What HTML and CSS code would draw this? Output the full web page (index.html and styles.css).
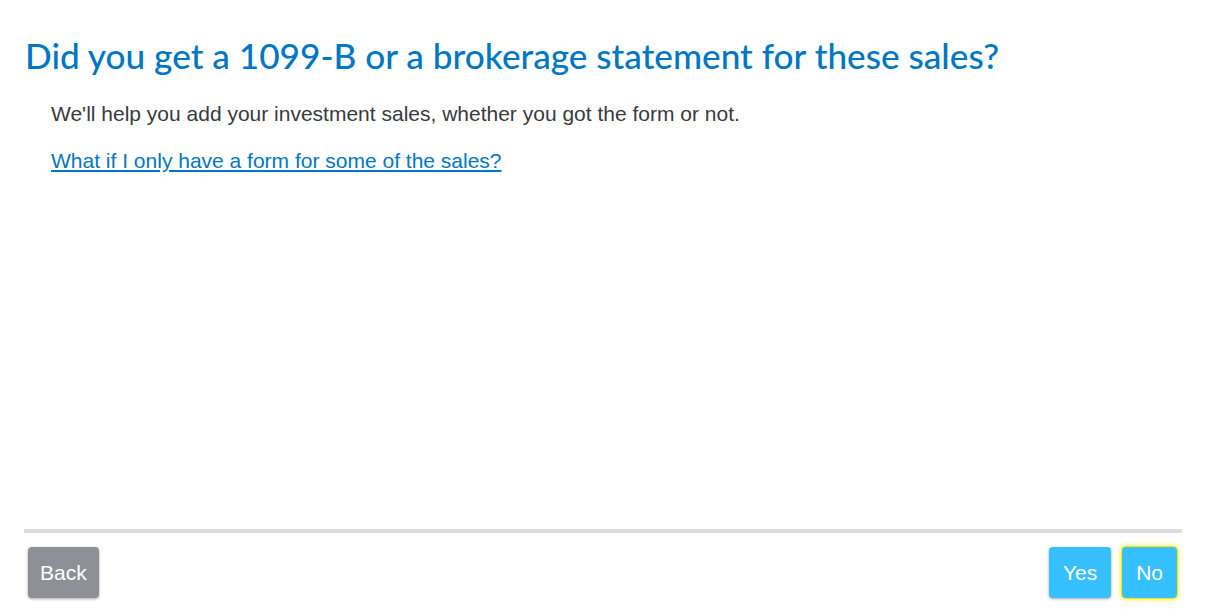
FILE: index.html
```html
<!DOCTYPE html>
<html lang="en">
<head>
  <meta charset="UTF-8">
  <title>Investment sales</title>
  <link rel="stylesheet" href="styles.css">
</head>
<body>
  <div class="page">
    <div class="content">
      <h1>Did you get a 1099-B or a brokerage statement for these sales?</h1>
      <div class="body-text">
        <p>We'll help you add your investment sales, whether you got the form or not.</p>
        <p><a href="#">What if I only have a form for some of the sales?</a></p>
      </div>
    </div>
    <div class="footer">
      <button class="btn btn-back">Back</button>
      <div class="answers">
        <button class="btn btn-answer">Yes</button>
        <button class="btn btn-answer focused">No</button>
      </div>
    </div>
  </div>
</body>
</html>
```

FILE: styles.css
```css
body {
  margin: 0;
  background: #fff;
  font-family: 'Liberation Sans', Arial, sans-serif;
  color: #393a3d;
}

.page {
  width: 1158px;
  margin-left: 24px;
  height: 609px;
  display: flex;
  flex-direction: column;
}

.content {
  flex: 1;
}

h1 {
  font-family: 'Lato', 'Noto Sans', sans-serif;
  font-weight: 500;
  font-size: 35.2px;
  color: #0077c5;
  margin: 33px 0 0 1px;
  line-height: 44px;
}

.body-text {
  padding-left: 27px;
  font-size: 21px;
}

.body-text p {
  margin: 25px 0 0;
}

.body-text p + p {
  margin-top: 23px;
}

.body-text a {
  color: #0077c5;
  text-decoration: underline;
}

.footer {
  border-top: 4px solid #dcdcdc;
  margin-bottom: 11px;
  padding-top: 14px;
  display: flex;
  justify-content: space-between;
}

.btn {
  font-family: 'Liberation Sans', Arial, sans-serif;
  font-size: 21px;
  color: #fff;
  border: none;
  border-radius: 4px;
  height: 51px;
  padding: 0 14px;
  box-shadow: 0 1px 3px rgba(0, 0, 0, 0.35);
  cursor: pointer;
}

.btn-back {
  background: #8d9096;
  margin-left: 4px;
  padding: 0 12px;
}

.answers {
  display: flex;
  gap: 11px;
  margin-right: 5px;
}

.btn-answer {
  background: #37c0ff;
}

.btn-answer.focused {
  box-shadow: 0 0 0 1px #ffe600, 0 0 4px 2px rgba(255, 230, 0, 0.6);
}
```
